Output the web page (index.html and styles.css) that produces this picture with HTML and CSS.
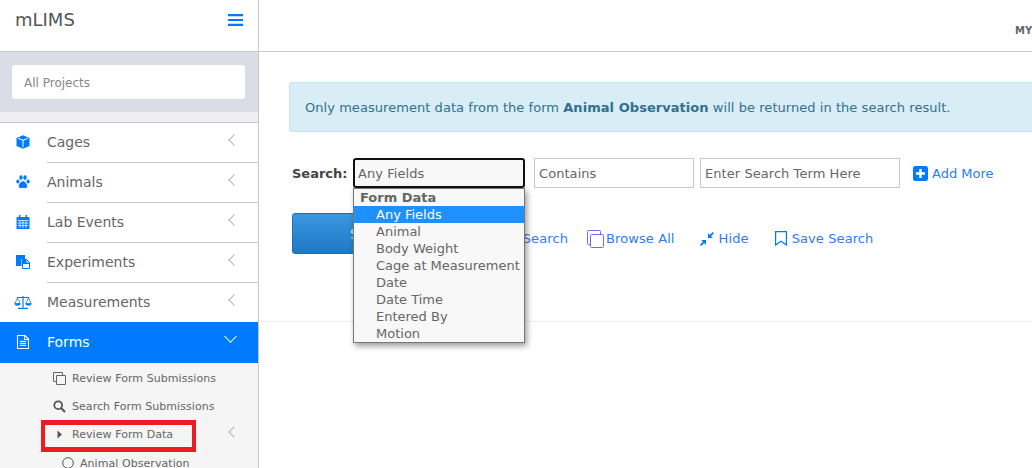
FILE: index.html
```html
<!DOCTYPE html>
<html lang="en">
<head>
<meta charset="utf-8">
<title>mLIMS</title>
<link rel="stylesheet" href="styles.css">
</head>
<body>
<div class="app">
  <aside class="sidebar">
    <div class="brand">
      <span class="logo">mLIMS</span>
      <svg class="burger" width="15" height="12" viewBox="0 0 15 12"><path d="M0 0h15v2.200H0zM0 4.900h15v2.200H0zM0 9.800h15V12H0z" fill="#007bff"/></svg>
    </div>
    <div class="project-band"><div class="project-box">All Projects</div></div>
    <div class="band-gap"></div>
    <nav class="nav">
      <a class="nav-item">
        <svg class="nav-icon" viewBox="0 0 14 14"><path d="M7 .3 13.500 3v8L7 13.800.5 11V3z" fill="#007bff"/><path d="M2.200 3.300 7 5.300l4.800-2M7 5.300v7" fill="none" stroke="#fff" stroke-width="1"/></svg>
        <span class="nav-label">Cages</span><span class="chev"></span>
      </a>
      <a class="nav-item">
        <svg class="nav-icon" viewBox="0 0 14 14"><g fill="#007bff"><ellipse cx="1.900" cy="6.600" rx="1.600" ry="2"/><ellipse cx="5" cy="2.600" rx="1.700" ry="2.300"/><ellipse cx="9" cy="2.600" rx="1.700" ry="2.300"/><ellipse cx="12.100" cy="6.600" rx="1.600" ry="2"/><path d="M7 6.200c2 0 4.200 2.800 4.200 4.800 0 1.700-1.200 2.200-2.200 2.200-.8 0-1.300-.4-2-.4s-1.200.4-2 .4c-1 0-2.200-.5-2.200-2.200C2.800 9 5 6.200 7 6.200z"/></g></svg>
        <span class="nav-label">Animals</span><span class="chev"></span>
      </a>
      <a class="nav-item">
        <svg class="nav-icon" viewBox="0 0 14 14"><path d="M.5 2H13.500V14H.5zM3 0h1.500v2.500H3zM9.500 0H11v2.500H9.500z" fill="#007bff"/><path d="M1.500 5.500h11M1.500 8h11M1.500 10.500h11M4 5v8M7 5v8M10 5v8" stroke="#fff" stroke-width=".7" fill="none"/></svg>
        <span class="nav-label">Lab Events</span><span class="chev"></span>
      </a>
      <a class="nav-item">
        <svg class="nav-icon" viewBox="0 0 14 14"><path d="M0 0h9v4H5.500v7H0z" fill="#007bff"/><path d="M6.500 4.500h4l3 3v6h-7z" fill="#fff" stroke="#007bff"/><path d="M6.500 4.500h4v3h3v1.500h-7z" fill="#007bff"/></svg>
        <span class="nav-label">Experiments</span><span class="chev"></span>
      </a>
      <a class="nav-item">
        <svg class="nav-icon wide" viewBox="0 0 18 14"><g fill="none" stroke="#007bff"><path d="M9 1v11.500M4 13.300h10M3 2.500h12" stroke-width="1.200"/><path d="M3.500 3 .8 8.500h5.400zM14.500 3l-2.700 5.500h5.400z" stroke-width=".8"/></g><path d="M.5 8.500h6c0 3-6 3-6 0zM11.500 8.500h6c0 3-6 3-6 0z" fill="#007bff"/></svg>
        <span class="nav-label">Measurements</span><span class="chev"></span>
      </a>
      <a class="nav-item active">
        <svg class="nav-icon" viewBox="0 0 14 14"><path d="M1.500.5h7.500l3.500 3.500v9.500h-11z" fill="none" stroke="#fff" stroke-width="1.100"/><path d="M8.500.5V4.500h4M3.800 6.300h6.400M3.800 8.300h6.400M3.800 10.300h6.400" fill="none" stroke="#fff" stroke-width="1"/></svg>
        <span class="nav-label">Forms</span><span class="chev down"></span>
      </a>
      <div class="subnav">
        <a class="sub-item">
          <svg class="sub-icon" viewBox="0 0 13 13"><g fill="none" stroke="#666"><path d="M3.500 3.500h9v9h-9z"/><path d="M3 9.500H.5v-9h9V3"/></g></svg>
          <span>Review Form Submissions</span>
        </a>
        <a class="sub-item">
          <svg class="sub-icon" viewBox="0 0 13 13"><circle cx="5.200" cy="5.200" r="3.900" fill="none" stroke="#555" stroke-width="1.800"/><path d="m8 8 4 4" stroke="#555" stroke-width="2.200"/></svg>
          <span>Search Form Submissions</span>
        </a>
        <a class="sub-item flagged">
          <svg class="sub-icon" viewBox="0 0 13 13"><path d="M4.500 2.500 9 6.500 4.500 10.500z" fill="#555"/></svg>
          <span>Review Form Data</span><span class="chev small"></span>
          <span class="red-box"></span>
        </a>
        <a class="sub-item nested">
          <svg class="sub-icon circle" viewBox="0 0 12 12"><circle cx="6" cy="6" r="5.300" fill="none" stroke="#555"/></svg>
          <span>Animal Observation</span>
        </a>
      </div>
    </nav>
  </aside>

  <main class="main">
    <header class="topbar"><span class="my">MY</span></header>
    <section class="content">
      <div class="alert">Only measurement data from the form <b>Animal Observation</b> will be returned in the search result.</div>
      <div class="search-row">
        <label class="search-label">Search:</label>
        <div class="select-wrap">
          <div class="field select-open">Any Fields</div>
          <div class="dropdown">
            <div class="group">Form Data</div>
            <div class="opt selected">Any Fields</div>
            <div class="opt">Animal</div>
            <div class="opt">Body Weight</div>
            <div class="opt">Cage at Measurement</div>
            <div class="opt">Date</div>
            <div class="opt">Date Time</div>
            <div class="opt">Entered By</div>
            <div class="opt">Motion</div>
          </div>
        </div>
        <div class="field contains">Contains</div>
        <div class="field term">Enter Search Term Here</div>
        <a class="link add">
          <svg width="15" height="15" viewBox="0 0 15 15"><rect width="15" height="15" rx="2.500" fill="#007bff"/><path d="M3 6.300h3.300V3h2.400v3.300H12v2.400H8.700V12H6.300V8.700H3z" fill="#fff"/></svg>
          Add More
        </a>
      </div>
      <div class="action-row">
        <button class="btn">Search</button>
        <a class="link clear">Clear Search</a>
        <a class="link browse">
          <svg width="17" height="18" viewBox="0 0 17 18"><g fill="none" stroke="#6a6ef5"><rect x="3.500" y="4.500" width="13" height="13" rx="1"/><path d="M3 14.500H1.500a1 1 0 0 1-1-1v-12a1 1 0 0 1 1-1h11a1 1 0 0 1 1 1V4"/></g></svg>
          Browse All
        </a>
        <a class="link hide">
          <svg width="14" height="14" viewBox="0 0 14 14"><path d="M14 1.300 12.700 0 9.800 2.900 8 1.100V6h4.900L11 4.200zM0 12.700 1.300 14l2.900-2.900L6 12.900V8H1.100L3 9.800z" fill="#007bff"/></svg>
          Hide
        </a>
        <a class="link save">
          <svg width="12" height="15" viewBox="0 0 12 15"><path d="M.6.600h10.800v13.400L6 10.300.6 14z" fill="none" stroke="#007bff" stroke-width="1.200"/></svg>
          Save Search
        </a>
      </div>
      <hr class="rule">
    </section>
  </main>
</div>
</body>
</html>
```
FILE: styles.css
```css
html, body {
  margin: 0;
  height: 100%;
  overflow: hidden;
  background: #fff;
}
body {
  font-family: "DejaVu Sans", Verdana, sans-serif;
  color: #666;
}
a { text-decoration: none; }

.app {
  display: flex;
  width: 1032px;
  height: 468px;
  overflow: hidden;
}

/* Sidebar */
.sidebar {
  flex: 0 0 258px;
  border-right: 1px solid #c8c8c8;
  height: 468px;
  overflow: hidden;
}
.brand {
  height: 51px;
  padding: 0 15px;
  display: flex;
  justify-content: space-between;
  align-items: flex-start;
  border-bottom: 1px solid #c8c8c8;
}
.logo {
  font-size: 18px;
  line-height: 20px;
  margin-top: 10px;
  color: #555;
}
.burger { margin-top: 14px; }
.project-band {
  height: 60px;
  background: #dcdce6;
  padding: 13px 13px 0 12px;
  box-sizing: border-box;
}
.project-box {
  height: 34px;
  background: #fff;
  border-radius: 3px;
  padding-left: 12px;
  font-size: 12px;
  line-height: 36px;
  color: #888;
}
.band-gap {
  height: 10px;
  background: #eeeef3;
  border-bottom: 1px solid #c8c8c8;
}
.nav-item {
  position: relative;
  display: flex;
  align-items: center;
  box-sizing: border-box;
  height: 40px;
  padding-bottom: 2px;
  font-size: 14px;
  color: #666;
}
.nav-item:not(.active)::after {
  content: "";
  position: absolute;
  left: 47px;
  right: 0;
  bottom: 0;
  height: 1px;
  background: #c8c8c8;
}
.nav-item:nth-child(5) { height: 39px; }
.nav-item:nth-child(5)::after { display: none; }
.nav-icon {
  width: 14px;
  height: 14px;
  margin-left: 16px;
  margin-right: 17px;
  flex: none;
}
.nav-icon.wide {
  width: 18px;
  margin-left: 14px;
  margin-right: 15px;
}
.nav-label { flex: 1; }
.chev {
  width: 7px;
  height: 7px;
  margin-right: 20px;
  margin-top: -4px;
  border-left: 1.300px solid #b5b5b5;
  border-bottom: 1.300px solid #b5b5b5;
  transform: rotate(45deg);
  flex: none;
}
.nav-item.active {
  background: #007bff;
  color: #fff;
  height: 41px;
}
.chev.down {
  width: 8px;
  height: 8px;
  border-color: #fff;
  border-width: 1.500px;
  transform: rotate(-45deg);
  margin-top: -11px;
  margin-right: 23px;
}

.subnav {
  background: #f5f5f5;
  height: 105px;
  padding-top: 1px;
}
.sub-item {
  position: relative;
  display: flex;
  align-items: center;
  height: 28px;
  padding-left: 53px;
  font-size: 11px;
  letter-spacing: 0.06px;
  color: #666;
}
.sub-icon {
  width: 13px;
  height: 13px;
  margin-right: 6px;
  flex: none;
}
.sub-item span:first-of-type { flex: 1; }
.sub-item.nested {
  padding-left: 62px;
  height: 30px;
}
.sub-icon.circle {
  width: 12px;
  height: 12px;
}
.chev.small {
  flex: none;
}
.red-box {
  position: absolute;
  left: 41px;
  top: 0;
  width: 155px;
  height: 32px;
  border: 4px solid #ed1c24;
  border-width: 5px 4px;
  box-sizing: border-box;
}

/* Main */
.main {
  flex: 1;
  min-width: 0;
}
.topbar {
  height: 51px;
  box-sizing: content-box;
  border-bottom: 1px solid #c8c8c8;
  display: flex;
  align-items: flex-start;
  padding-left: 756px;
  white-space: nowrap;
  overflow: hidden;
}
.my {
  font-size: 10px;
  font-weight: bold;
  line-height: 14px;
  margin-top: 24px;
  color: #666;
}
.content {
  padding: 30px 0 0 30px;
  width: 800px;
}
.alert {
  height: 50px;
  box-sizing: border-box;
  width: 790px;
  background: #d9edf7;
  border: 1px solid #bce8f1;
  border-radius: 3px;
  padding: 1px 0 0 15px;
  font-size: 13px;
  letter-spacing: 0.05px;
  line-height: 47px;
  color: #31708f;
  white-space: nowrap;
}
.search-row {
  display: flex;
  align-items: center;
  margin-top: 26px;
  height: 30px;
}
.search-label {
  font-size: 13px;
  font-weight: bold;
  color: #444;
  margin-left: 3px;
  width: 61px;
  flex: none;
}
.select-wrap {
  position: relative;
  width: 172px;
  height: 30px;
  flex: none;
  margin-right: 9px;
}
.field {
  box-sizing: border-box;
  height: 30px;
  border: 1px solid #c8c8c8;
  padding-left: 4px;
  font-size: 13px;
  letter-spacing: 0.06px;
  line-height: 30px;
  color: #666;
  white-space: nowrap;
}
.select-open {
  width: 172px;
  border: 2px solid #111;
  border-radius: 3px;
  background: #f8f8f8;
  padding-left: 3px;
  line-height: 28px;
}
.dropdown {
  position: absolute;
  top: 30px;
  left: 0;
  width: 172px;
  box-sizing: border-box;
  background: #f8f8f8;
  border: 1px solid #777;
  box-shadow: 2px 3px 6px rgba(0, 0, 0, 0.4);
  font-size: 13px;
  line-height: 17px;
  z-index: 5;
  color: #666;
}
.group {
  font-weight: bold;
  padding-left: 6px;
}
.opt {
  padding-left: 22px;
  white-space: nowrap;
}
.opt.selected {
  background: #1e90ff;
  color: #fff;
}
.contains {
  width: 160px;
  flex: none;
  margin-right: 6px;
}
.term {
  width: 200px;
  flex: none;
}
.link {
  display: inline-flex;
  align-items: center;
  gap: 3px;
  font-size: 13px;
  letter-spacing: 0.1px;
  color: #2f7cf6;
  white-space: nowrap;
}
.add { margin-left: 13px; gap: 4px; letter-spacing: 0; }
.action-row {
  display: flex;
  align-items: center;
  margin-top: 25px;
  height: 41px;
  margin-left: 3px;
}
.action-row .link { padding-top: 10px; }
.btn {
  width: 190px;
  height: 41px;
  box-sizing: border-box;
  border: 1px solid #1a6fb5;
  border-radius: 3px;
  background: linear-gradient(#3a97e0, #1f78c4);
  color: #d8ecff;
  font-family: inherit;
  font-size: 14px;
  flex: none;
  text-align: left;
  padding: 0 0 0 57px;
}
.clear { margin-left: 2px; }
.browse { margin-left: 19px; gap: 2px; }
.hide { margin-left: 25px; gap: 5px; }
.save { margin-left: 26px; gap: 5px; }
.rule {
  border: 0;
  border-top: 1px solid #eee;
  margin: 67px 0 0 -30px;
  width: 790px;
}
```
